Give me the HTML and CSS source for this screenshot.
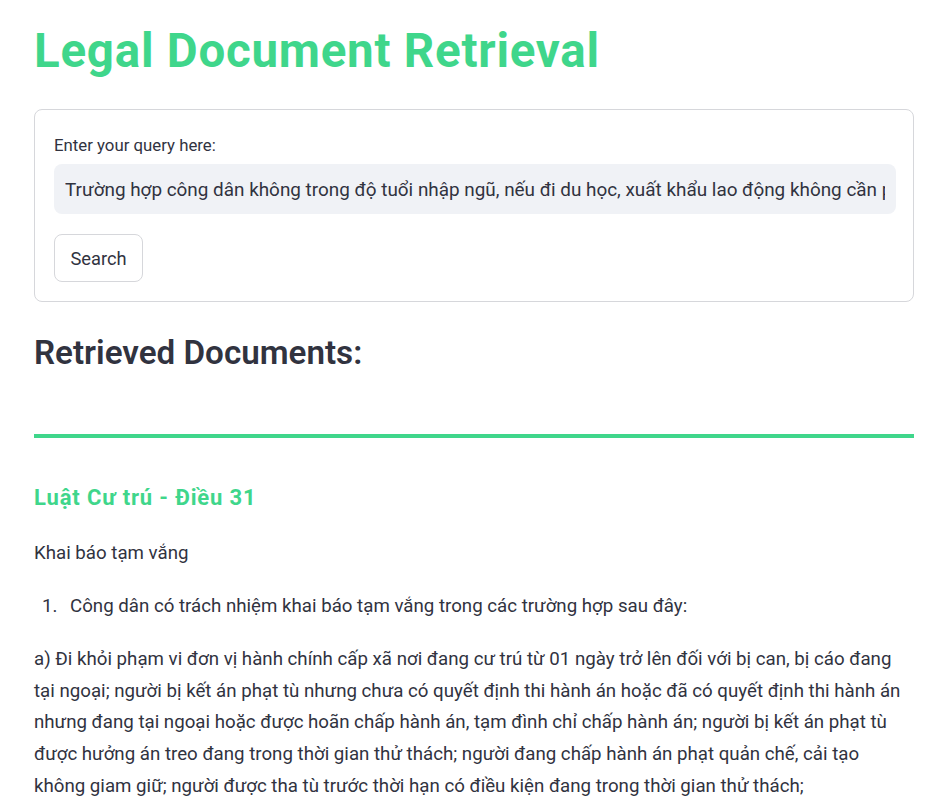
FILE: index.html
```html
<!DOCTYPE html>
<html lang="vi">
<head>
<meta charset="utf-8">
<title>Legal Document Retrieval</title>
<link rel="stylesheet" href="styles.css">
</head>
<body>
<main class="page">
  <h1 class="title">Legal Document Retrieval</h1>

  <section class="form-box">
    <label class="field-label" for="query">Enter your query here:</label>
    <div class="input-wrap">
      <input id="query" class="query-input" type="text" value="Trường hợp công dân không trong độ tuổi nhập ngũ, nếu đi du học, xuất khẩu lao động không cần phải đăng ký nghĩa vụ quân sự?">
    </div>
    <button class="search-btn" type="button">Search</button>
  </section>

  <h2 class="section-title">Retrieved Documents:</h2>
  <hr class="divider">

  <article class="doc">
    <h3 class="doc-title">Luật Cư trú - Điều 31</h3>
    <p class="doc-p">Khai báo tạm vắng</p>
    <ol class="doc-list">
      <li class="doc-li"><span class="num">1.</span><span>Công dân có trách nhiệm khai báo tạm vắng trong các trường hợp sau đây:</span></li>
    </ol>
    <p class="doc-p">a) Đi khỏi phạm vi đơn vị hành chính cấp xã nơi đang cư trú từ 01 ngày trở lên đối với bị can, bị cáo đang tại ngoại; người bị kết án phạt tù nhưng chưa có quyết định thi hành án hoặc đã có quyết định thi hành án nhưng đang tại ngoại hoặc được hoãn chấp hành án, tạm đình chỉ chấp hành án; người bị kết án phạt tù được hưởng án treo đang trong thời gian thử thách; người đang chấp hành án phạt quản chế, cải tạo không giam giữ; người được tha tù trước thời hạn có điều kiện đang trong thời gian thử thách;</p>
  </article>
</main>
</body>
</html>
```

FILE: styles.css
```css
html, body {
  margin: 0;
  padding: 0;
  background: #ffffff;
}

body {
  font-family: Roboto, "Noto Sans", "Liberation Sans", sans-serif;
  color: #31333f;
  font-size: 18.7px;
}

.page {
  width: 880px;
  padding: 23px 30px 0 34px;
}

.title {
  margin: 0;
  font-size: 47.5px;
  line-height: 56px;
  font-weight: 700;
  color: #3fd68b;
  letter-spacing: 0.75px;
}

.form-box {
  margin-top: 30px;
  border: 1px solid #d6d7db;
  border-radius: 8px;
  padding: 24px 17px 19px 19px;
  display: flex;
  flex-direction: column;
  align-items: flex-start;
}

.field-label {
  font-size: 16.8px;
  line-height: 22px;
  color: #31333f;
}

.input-wrap {
  margin-top: 8px;
  align-self: stretch;
  height: 50px;
  background: #f0f2f6;
  border-radius: 8px;
  display: flex;
  align-items: center;
  padding: 0 11px;
}

.query-input {
  width: 100%;
  border: none;
  outline: none;
  background: transparent;
  font-family: inherit;
  font-size: 18.9px;
  color: #31333f;
  padding: 0;
  margin: 0;
}

.search-btn {
  margin-top: 20px;
  width: 89px;
  height: 48px;
  border: 1px solid #d6d7db;
  border-radius: 8px;
  background: #ffffff;
  font-family: inherit;
  font-size: 18.3px;
  color: #31333f;
  padding: 0;
}

.section-title {
  margin: 31px 0 0;
  font-size: 33.2px;
  line-height: 40px;
  font-weight: 600;
  color: #31333f;
}

.divider {
  margin: 61px 0 0;
  border: none;
  height: 4px;
  background: #3fd68b;
}

.doc-title {
  margin: 46px 0 0;
  font-size: 22px;
  line-height: 28px;
  font-weight: 700;
  color: #3fd68b;
  letter-spacing: 0.85px;
}

.doc-p {
  margin: 26px 0 0;
  line-height: 31.6px;
}

.doc-list {
  list-style: none;
  margin: 21.5px 0 0;
  padding: 0;
}

.doc-li {
  display: flex;
  line-height: 31.6px;
}

.num {
  width: 28px;
  padding-left: 8px;
  flex: none;
}

.doc-list + .doc-p {
  margin-top: 21.5px;
}
```
